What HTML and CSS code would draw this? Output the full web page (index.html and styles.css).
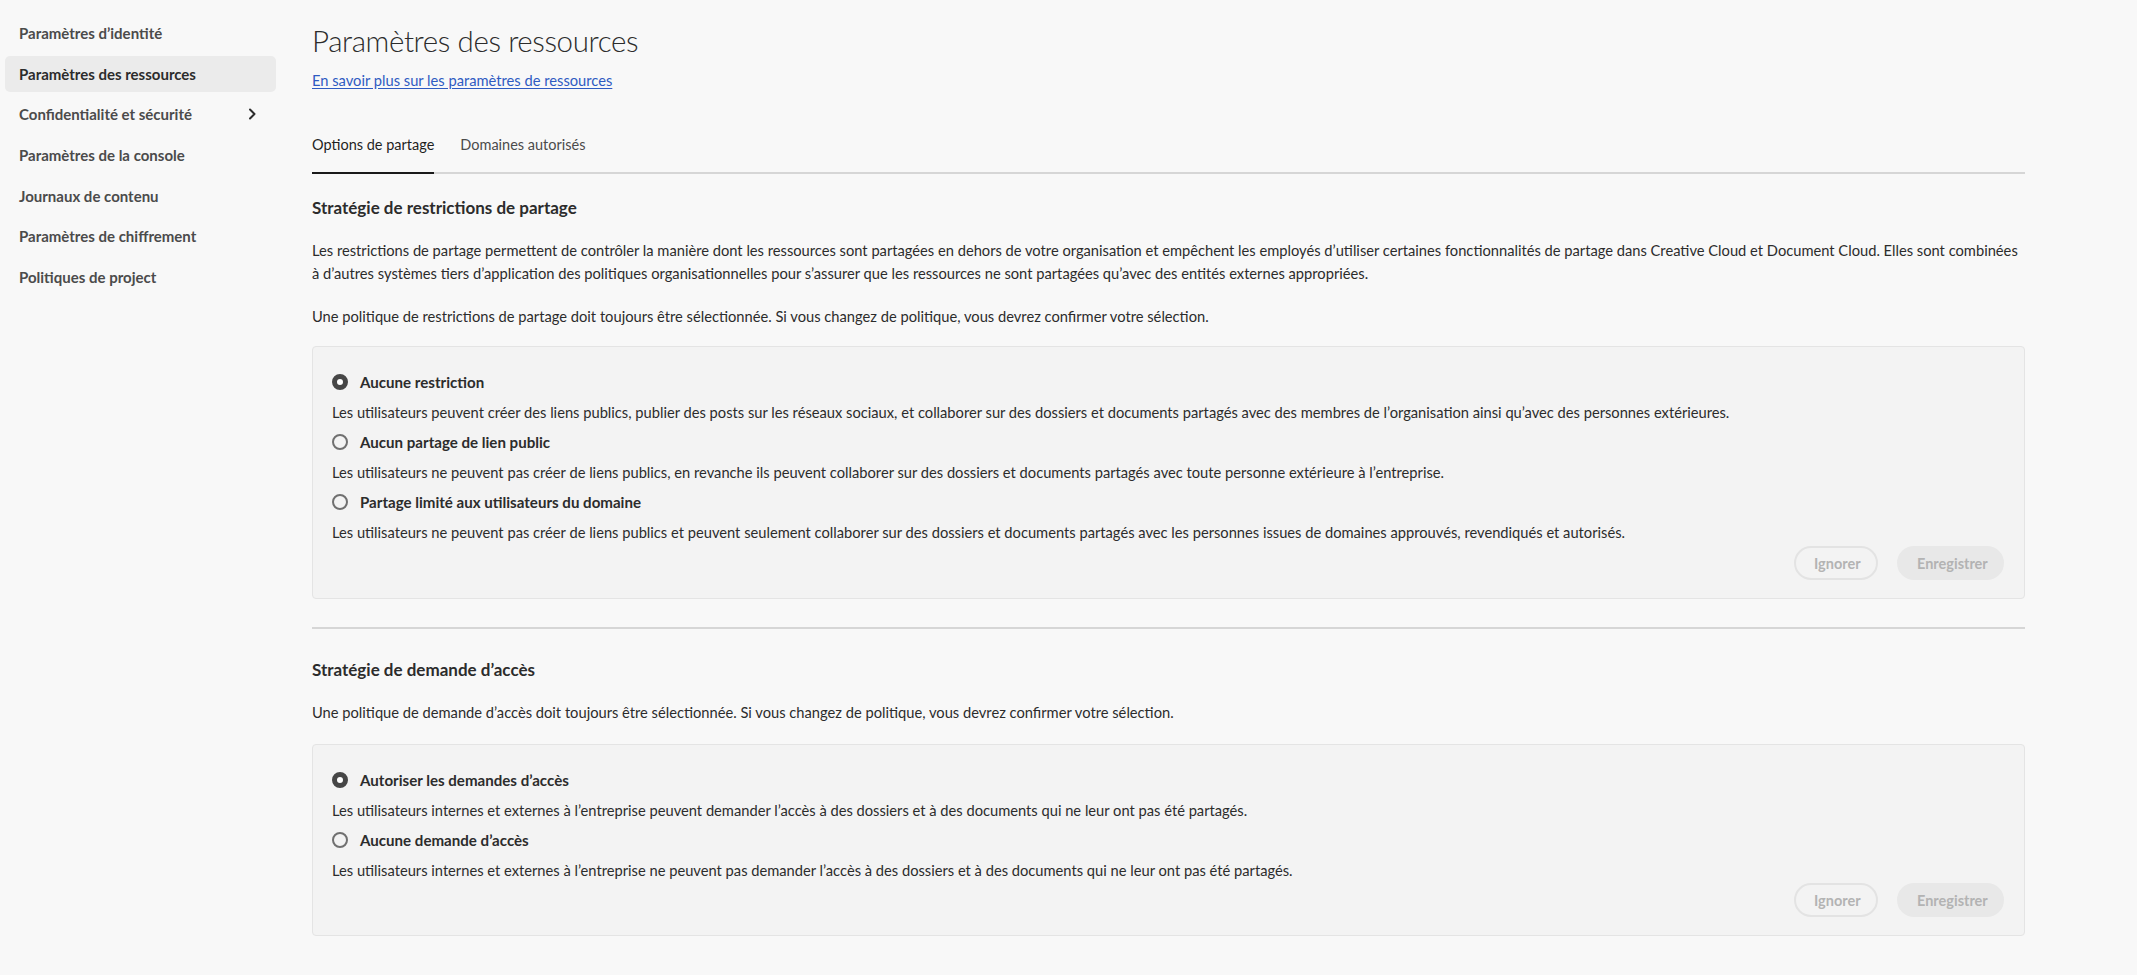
FILE: index.html
```html
<!DOCTYPE html>
<html lang="fr">
<head>
<meta charset="utf-8">
<title>Paramètres des ressources</title>
<link rel="stylesheet" href="styles.css">
</head>
<body>
<div class="layout">
  <nav class="sidebar">
    <a class="nav-item">Paramètres d’identité</a>
    <a class="nav-item active">Paramètres des ressources</a>
    <a class="nav-item has-sub">Confidentialité et sécurité
      <svg class="chev" width="10" height="12" viewBox="0 0 10 12"><path d="M3 1.5 L7.5 6 L3 10.5" fill="none" stroke="#2c2c2c" stroke-width="2" stroke-linecap="round" stroke-linejoin="round"/></svg>
    </a>
    <a class="nav-item">Paramètres de la console</a>
    <a class="nav-item">Journaux de contenu</a>
    <a class="nav-item">Paramètres de chiffrement</a>
    <a class="nav-item">Politiques de project</a>
  </nav>
  <main class="main">
    <h1 class="title">Paramètres des ressources</h1>
    <a class="learn-link" href="#">En savoir plus sur les paramètres de ressources</a>
    <div class="tabs">
      <div class="tab active">Options de partage</div>
      <div class="tab">Domaines autorisés</div>
    </div>

    <h2 class="section-title">Stratégie de restrictions de partage</h2>
    <p class="para first">Les restrictions de partage permettent de contrôler la manière dont les ressources sont partagées en dehors de votre organisation et empêchent les employés d’utiliser certaines fonctionnalités de partage dans Creative Cloud et Document Cloud. Elles sont combinées à d’autres systèmes tiers d’application des politiques organisationnelles pour s’assurer que les ressources ne sont partagées qu’avec des entités externes appropriées.</p>
    <p class="para second">Une politique de restrictions de partage doit toujours être sélectionnée. Si vous changez de politique, vous devrez confirmer votre sélection.</p>
    <div class="box">
      <div class="option"><span class="radio checked"></span><span class="opt-label">Aucune restriction</span></div>
      <div class="opt-desc">Les utilisateurs peuvent créer des liens publics, publier des posts sur les réseaux sociaux, et collaborer sur des dossiers et documents partagés avec des membres de l’organisation ainsi qu’avec des personnes extérieures.</div>
      <div class="option"><span class="radio"></span><span class="opt-label">Aucun partage de lien public</span></div>
      <div class="opt-desc">Les utilisateurs ne peuvent pas créer de liens publics, en revanche ils peuvent collaborer sur des dossiers et documents partagés avec toute personne extérieure à l’entreprise.</div>
      <div class="option"><span class="radio"></span><span class="opt-label">Partage limité aux utilisateurs du domaine</span></div>
      <div class="opt-desc">Les utilisateurs ne peuvent pas créer de liens publics et peuvent seulement collaborer sur des dossiers et documents partagés avec les personnes issues de domaines approuvés, revendiqués et autorisés.</div>
      <div class="actions">
        <button class="btn btn-outline">Ignorer</button>
        <button class="btn btn-fill">Enregistrer</button>
      </div>
    </div>

    <hr class="divider">

    <h2 class="section-title second-title">Stratégie de demande d’accès</h2>
    <p class="para third">Une politique de demande d’accès doit toujours être sélectionnée. Si vous changez de politique, vous devrez confirmer votre sélection.</p>
    <div class="box box-two">
      <div class="option"><span class="radio checked"></span><span class="opt-label">Autoriser les demandes d’accès</span></div>
      <div class="opt-desc">Les utilisateurs internes et externes à l’entreprise peuvent demander l’accès à des dossiers et à des documents qui ne leur ont pas été partagés.</div>
      <div class="option"><span class="radio"></span><span class="opt-label">Aucune demande d’accès</span></div>
      <div class="opt-desc">Les utilisateurs internes et externes à l’entreprise ne peuvent pas demander l’accès à des dossiers et à des documents qui ne leur ont pas été partagés.</div>
      <div class="actions">
        <button class="btn btn-outline">Ignorer</button>
        <button class="btn btn-fill">Enregistrer</button>
      </div>
    </div>
  </main>
</div>
</body>
</html>
```
FILE: styles.css
```css
* { box-sizing: border-box; }
html, body { margin: 0; padding: 0; }
body {
  background: #f8f8f8;
  font-family: Lato, "Noto Sans", sans-serif;
  color: #2c2c2c;
  width: 2137px;
  height: 975px;
  overflow: hidden;
}
.layout { display: flex; align-items: flex-start; }

.sidebar {
  width: 281px;
  flex: none;
  padding: 15px 5px 0 5px;
  display: flex;
  flex-direction: column;
  gap: 4.67px;
}
.nav-item {
  height: 36px;
  display: flex;
  align-items: center;
  justify-content: space-between;
  padding: 0 19px 0 14px;
  border-radius: 5px;
  font-size: 15px;
  font-weight: 700;
  color: #4b4b4b;
  cursor: pointer;
}
.nav-item.active { background: #ebebeb; color: #2c2c2c; }
.chev { display: block; }

.main {
  flex: 1;
  padding: 20px 112px 0 31px;
}
.title {
  margin: 0;
  font-size: 29.5px;
  font-weight: 300;
  letter-spacing: -0.4px;
  line-height: 42px;
  color: #2c2c2c;
}
.learn-link {
  display: block;
  margin-top: 7px;
  width: max-content;
  line-height: 22px;
  font-size: 14.7px;
  color: #2f5bc2;
  text-decoration: underline;
  text-underline-offset: 2px;
}
.tabs {
  margin-top: 43px;
  display: flex;
  gap: 26px;
  border-bottom: 2px solid #d6d6d6;
}
.tab {
  position: relative;
  line-height: 22px;
  padding-bottom: 16px;
  font-size: 14.5px;
  color: #4b4b4b;
}
.tab.active { color: #1f1f1f; }
.tab.active::after {
  content: "";
  position: absolute;
  left: 0; right: 0; bottom: -2px;
  height: 2px;
  background: #1a1a1a;
}
.section-title {
  margin: 22px 0 0 0;
  font-size: 17px;
  font-weight: 700;
  line-height: 24px;
  color: #2c2c2c;
}
.para {
  margin: 0;
  font-size: 14.7px;
  line-height: 23px;
  color: #2c2c2c;
}
.para.first { margin-top: 18.5px; padding-right: 6px; }
.para.second { margin-top: 20px; }
.para.third { margin-top: 18.5px; }

.box {
  margin-top: 18.5px;
  background: #f3f3f3;
  border: 1px solid #e4e4e4;
  border-radius: 4px;
  padding: 20px 20px 18px 19px;
}
.box-two { margin-top: 20.5px; }
.option {
  height: 30px;
  display: flex;
  align-items: center;
}
.radio {
  width: 16px;
  height: 16px;
  border-radius: 50%;
  border: 2px solid #707070;
  flex: none;
  margin-right: 12px;
}
.radio.checked { border: 5px solid #464646; background: #ffffff; }
.opt-label {
  font-size: 15.1px;
  font-weight: 700;
  color: #2c2c2c;
}
.opt-desc {
  height: 30px;
  line-height: 30px;
  font-size: 14.7px;
  color: #2c2c2c;
  white-space: nowrap;
}
.actions {
  margin-top: -1px;
  display: flex;
  justify-content: flex-end;
  gap: 19px;
}
.box-two .actions { margin-top: -2px; }
.btn {
  height: 34px;
  border-radius: 17px;
  font-family: Lato, "Noto Sans", sans-serif;
  font-size: 14.5px;
  font-weight: 700;
  color: #b3b3b3;
  padding: 0 18px;
}
.btn-outline {
  width: 84px;
  background: transparent;
  border: 2px solid #e3e3e3;
}
.btn-fill {
  width: 107px;
  background: #e8e8e8;
  border: 2px solid #e8e8e8;
}
.divider {
  margin: 28px 0 0 0;
  height: 2px;
  border: 0;
  background: #d6d6d6;
}
.section-title.second-title { margin-top: 29px; }
```
